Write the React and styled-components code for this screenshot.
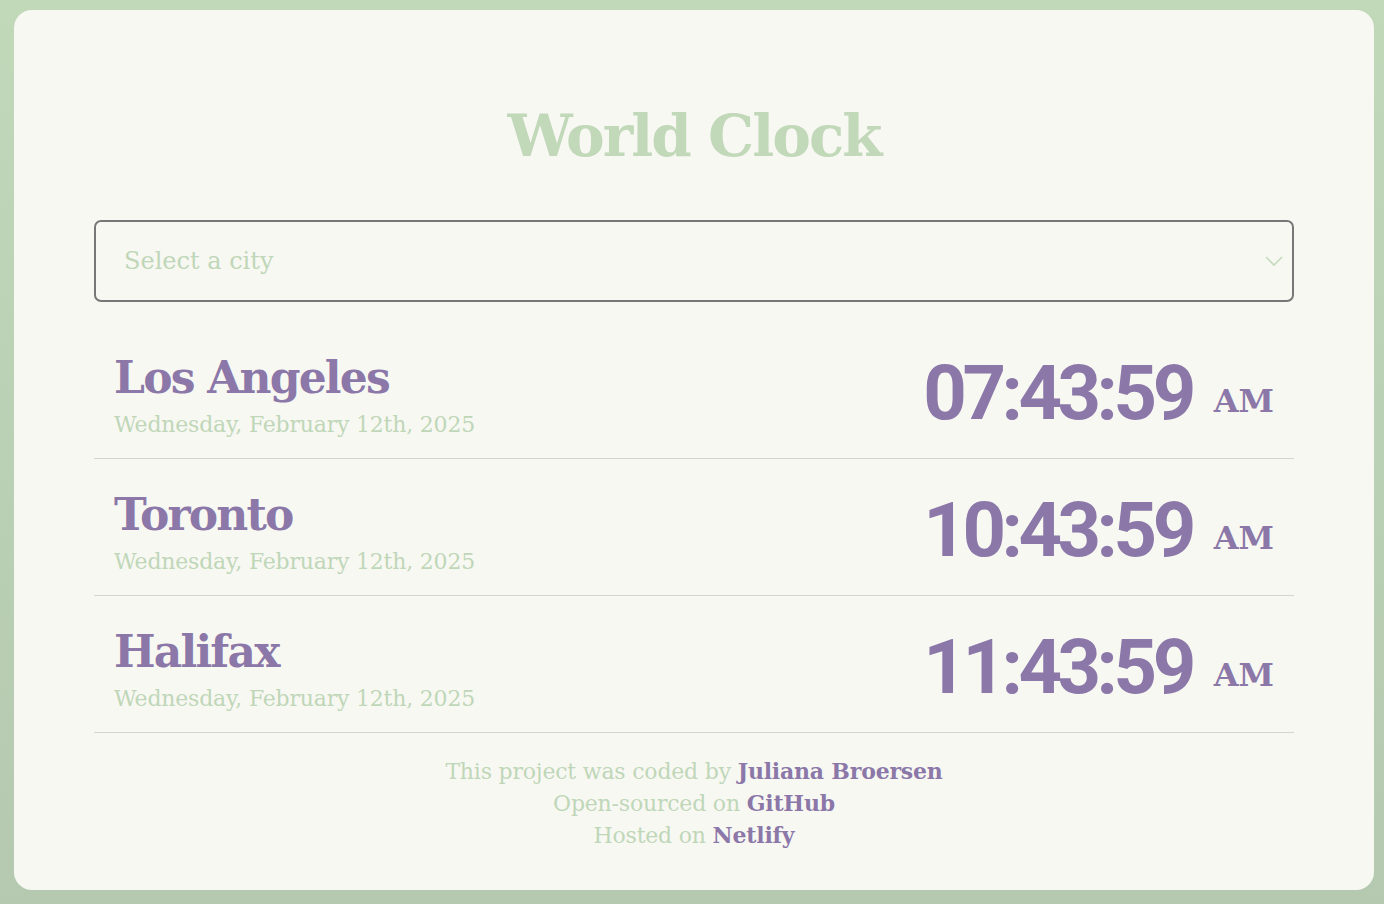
import React from 'react';
import styled, { createGlobalStyle } from 'styled-components';

const GlobalStyle = createGlobalStyle`
  html, body {
    margin: 0;
    padding: 0;
  }
  body {
    background: linear-gradient(180deg, #c1d8b9 0%, #b4c9b0 100%);
    font-family: "DejaVu Serif", "Liberation Serif", serif;
    min-height: 100vh;
  }
`;

const cities = [
  { name: 'Los Angeles', date: 'Wednesday, February 12th, 2025', time: '07:43:59', period: 'AM' },
  { name: 'Toronto', date: 'Wednesday, February 12th, 2025', time: '10:43:59', period: 'AM' },
  { name: 'Halifax', date: 'Wednesday, February 12th, 2025', time: '11:43:59', period: 'AM' },
];

export default function App() {
  return (
    <>
      <GlobalStyle />
      <Page>
        <Card>
          <Title>World Clock</Title>
          <SelectWrap>
            <CitySelect defaultValue="">
              <option value="" disabled>Select a city</option>
              <option value="tokyo">Tokyo</option>
              <option value="paris">Paris</option>
            </CitySelect>
            <Chevron width="20" height="12" viewBox="0 0 20 12" fill="none">
              <path d="M2 2 L10 10 L18 2" stroke="#c4dbbd" strokeWidth="1.6" />
            </Chevron>
          </SelectWrap>
          <List>
            {cities.map((c) => (
              <Row key={c.name}>
                <div>
                  <CityName>{c.name}</CityName>
                  <CityDate>{c.date}</CityDate>
                </div>
                <Time>
                  {c.time}
                  <Period>{c.period}</Period>
                </Time>
              </Row>
            ))}
          </List>
          <Footer>
            <FooterLine>
              This project was coded by <a href="#">Juliana Broersen</a>
            </FooterLine>
            <FooterLine>
              Open-sourced on <a href="#">GitHub</a>
            </FooterLine>
            <FooterLine>
              Hosted on <a href="#">Netlify</a>
            </FooterLine>
          </Footer>
        </Card>
      </Page>
    </>
  );
}

const Page = styled.div`
  padding: 10px 10px 14px 14px;
  box-sizing: border-box;
  height: 904px;
  display: flex;
`;

const Card = styled.main`
  flex: 1;
  background: #f8f8f3;
  border-radius: 18px;
  padding: 0 80px;
  box-sizing: border-box;
`;

const Title = styled.h1`
  margin: 0;
  padding-top: 97px;
  height: 210px;
  box-sizing: border-box;
  text-align: center;
  color: #c1d8b9;
  font-size: 58px;
  font-weight: 700;
  letter-spacing: -2px;
  line-height: 1;
`;

const SelectWrap = styled.div`
  position: relative;
`;

const CitySelect = styled.select`
  appearance: none;
  width: 100%;
  height: 82px;
  box-sizing: border-box;
  border: 2px solid #777;
  border-radius: 7px;
  background: #f8f8f3;
  padding: 0 28px;
  font-family: inherit;
  font-size: 24px;
  color: #bfd7b8;
  outline: none;
`;

const Chevron = styled.svg`
  position: absolute;
  right: 10px;
  top: 35px;
  pointer-events: none;
`;

const List = styled.div`
  margin-top: 20px;
`;

const Row = styled.div`
  display: flex;
  justify-content: space-between;
  align-items: center;
  height: 137px;
  box-sizing: border-box;
  padding: 12px 20px 0 20px;
  border-bottom: 1px solid #d3d6cf;
`;

const CityName = styled.div`
  color: #8b78a8;
  font-size: 44px;
  font-weight: 700;
  letter-spacing: -1.8px;
  line-height: 1.2;
`;

const CityDate = styled.div`
  margin-top: 6px;
  color: #bfd7b8;
  font-size: 22px;
  letter-spacing: -0.2px;
  line-height: 1.3;
`;

const Time = styled.div`
  margin-bottom: 6px;
  color: #8b78a8;
  font-family: Roboto, "DejaVu Sans", sans-serif;
  font-size: 76px;
  font-weight: 700;
  letter-spacing: -4.5px;
  line-height: 1;
`;

const Period = styled.span`
  font-family: "DejaVu Serif", serif;
  font-size: 32px;
  letter-spacing: 0;
  margin-left: 22px;
  vertical-align: 7px;
`;

const Footer = styled.footer`
  padding-top: 22px;
  text-align: center;
  color: #bfd7b8;
  font-size: 22px;
  letter-spacing: -0.2px;

  a {
    color: #8b78a8;
    font-weight: 700;
    text-decoration: none;
  }
`;

const FooterLine = styled.div`
  height: 32px;
  line-height: 32px;
`;
